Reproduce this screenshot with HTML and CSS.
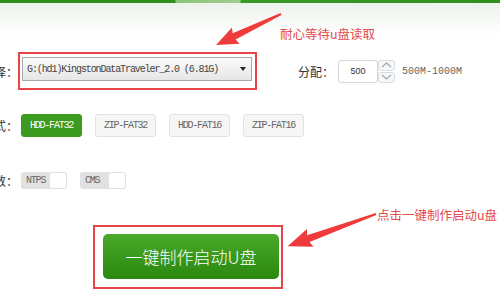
FILE: index.html
```html
<!DOCTYPE html>
<html lang="zh-CN">
<head>
  <meta charset="UTF-8" />
  <title>U盘启动制作</title>
  <link rel="stylesheet" href="styles.css">
</head>
<body>

<div class="topbar"></div>

<div class="page">
  <div class="form">

    <div class="row row-disk">
      <div class="label"><span>请选择U盘选择：</span></div>
      <div class="mark-box">
        <div class="select">
          <span>G:(hd1)KingstonDataTraveler_2.0 (6.81G)</span>
          <span class="caret"></span>
        </div>
      </div>
      <div class="alloc-label">分配：</div>
      <div class="num-input">500</div>
      <div class="spinner">
        <div class="spin-btn">
          <svg width="11" height="6" viewBox="0 0 11 6"><path d="M1 5 L5.5 1 L10 5" fill="none" stroke="#9aa3ad" stroke-width="1.2"/></svg>
        </div>
        <div class="spin-btn">
          <svg width="11" height="6" viewBox="0 0 11 6"><path d="M1 1 L5.5 5 L10 1" fill="none" stroke="#9aa3ad" stroke-width="1.2"/></svg>
        </div>
      </div>
      <div class="range">500M-1000M</div>
    </div>

    <div class="row row-mode">
      <div class="label"><span>模式：</span></div>
      <div class="mode-list">
        <div class="mode active">HDD-FAT32</div>
        <div class="mode">ZIP-FAT32</div>
        <div class="mode">HDD-FAT16</div>
        <div class="mode">ZIP-FAT16</div>
      </div>
    </div>

    <div class="row row-param">
      <div class="label"><span>参数：</span></div>
      <div class="toggle-list">
        <div class="toggle"><span>NTPS</span><i class="knob"></i></div>
        <div class="toggle"><span>CMS</span><i class="knob"></i></div>
      </div>
    </div>

    <div class="mark-box start-box">
      <div class="start-btn">一键制作启动U盘</div>
    </div>

  </div>

  <div class="note note-wait">耐心等待u盘读取</div>
  <div class="note note-click">点击一键制作启动u盘</div>

  <svg class="arrows" width="500" height="300" viewBox="0 0 500 300">
    <polygon transform="translate(281 14) rotate(154.5)" points="0,-1 52,-3.5 50,-9 72,0 50,9 52,3.5 0,1" fill="#ef3b3b"/>
    <polygon transform="translate(376 214) rotate(160)" points="0,-1 72,-3.5 70,-9.5 94,0 70,9.5 72,3.5 0,1" fill="#ef3b3b"/>
  </svg>
</div>

</body>
</html>
```

FILE: styles.css
```css
body {
  margin: 0;
  width: 500px;
  height: 300px;
  overflow: hidden;
  background: #fff;
  font-family: "Noto Sans CJK SC", "Noto Sans", sans-serif;
  color: #333;
}
.topbar {
  height: 3px;
  background: linear-gradient(90deg, #2f8f1c 0, #2f8f1c 175px, #8cc47a 176px, #9fce8e 240px, #3a9a26 241px, #2f8f1c 100%);
}
.page {
  position: relative;
  height: 297px;
  background: linear-gradient(#eef2ec 0, #f7f9f6 18px, #fff 34px);
}
.form {
  padding-top: 49px;
}
.row {
  display: flex;
  align-items: center;
}
.label {
  width: 18px;
  flex: none;
  display: flex;
  justify-content: flex-end;
  white-space: nowrap;
  font-size: 12px;
  color: #333;
}
.label span {
  flex: none;
}

/* disk row */
.row-disk {
  height: 38px;
}
.mark-box {
  border: 2px solid #e8454a;
  box-sizing: border-box;
}
.row-disk .mark-box {
  width: 239px;
  height: 38px;
  padding: 3px 3px 0 2px;
}
.select {
  height: 24px;
  box-sizing: border-box;
  border: 1px solid #a9a9a9;
  background: linear-gradient(#fbfbfb, #e6e6e6);
  display: flex;
  align-items: center;
  justify-content: space-between;
  padding: 0 5px 0 4px;
  font-family: "Liberation Mono", monospace;
  font-size: 10px;
  letter-spacing: -1.1px;
  color: #444;
}
.caret {
  width: 0;
  height: 0;
  border-left: 3.5px solid transparent;
  border-right: 3.5px solid transparent;
  border-top: 4px solid #222;
}
.alloc-label {
  margin-left: 41px;
  font-size: 12px;
  color: #333;
}
.num-input {
  margin-left: 4px;
  width: 40px;
  height: 23px;
  box-sizing: border-box;
  border: 1px solid #d6d6d6;
  border-radius: 3px;
  display: flex;
  align-items: center;
  justify-content: center;
  font-family: "Liberation Sans", sans-serif;
  font-size: 9px;
  color: #333;
}
.spinner {
  width: 17px;
  display: flex;
  flex-direction: column;
  gap: 1px;
}
.spin-btn {
  height: 11px;
  box-sizing: border-box;
  border: 1px solid #d8dde2;
  border-radius: 3px;
  background: #f7f8f9;
  display: flex;
  align-items: center;
  justify-content: center;
}
.range {
  margin-left: 7px;
  font-family: "Liberation Mono", monospace;
  font-size: 10px;
  letter-spacing: 0;
  color: #666;
}

/* mode row */
.row-mode {
  margin-top: 24px;
  height: 23px;
}
.mode-list {
  display: flex;
  gap: 13px;
  margin-left: 3px;
}
.mode {
  width: 61px;
  height: 23px;
  box-sizing: border-box;
  border: 1px solid #e2e2e2;
  border-radius: 3px;
  background: #f6f6f6;
  display: flex;
  align-items: center;
  justify-content: center;
  font-family: "Liberation Mono", monospace;
  font-size: 10px;
  letter-spacing: -1.2px;
  color: #666;
}
.mode.active {
  background: #3c9a1f;
  border-color: #3c9a1f;
  color: #fff;
}

/* param row */
.row-param {
  margin-top: 35px;
  height: 17px;
}
.toggle-list {
  display: flex;
  gap: 13px;
  margin-left: 3px;
}
.toggle {
  width: 46px;
  height: 17px;
  box-sizing: border-box;
  padding: 1px;
  border-radius: 3px;
  background: #e1e1e1;
  display: flex;
  align-items: center;
  justify-content: space-between;
  font-family: "Liberation Mono", monospace;
  font-size: 10px;
  letter-spacing: -1.2px;
  color: #666;
}
.toggle span {
  padding-left: 4px;
}
.knob {
  width: 16px;
  height: 15px;
  background: #fff;
  border-radius: 2px;
}

/* start button */
.start-box {
  margin-top: 36px;
  margin-left: 93px;
  width: 190px;
  height: 64px;
  padding: 7px 2px 8px 8px;
}
.start-btn {
  height: 45px;
  border-radius: 5px;
  background: linear-gradient(#4caa2a, #37971a 55%, #2a880e);
  color: #fff;
  font-size: 17px;
  font-weight: 300;
  display: flex;
  align-items: center;
  justify-content: center;
}

/* annotations */
.note {
  position: absolute;
  font-size: 12.5px;
  line-height: 15px;
  color: #e24a4d;
  white-space: nowrap;
}
.note-wait {
  left: 280px;
  top: 23px;
}
.note-click {
  left: 377px;
  top: 204px;
}
.arrows {
  position: absolute;
  left: 0;
  top: -3px;
}
```
